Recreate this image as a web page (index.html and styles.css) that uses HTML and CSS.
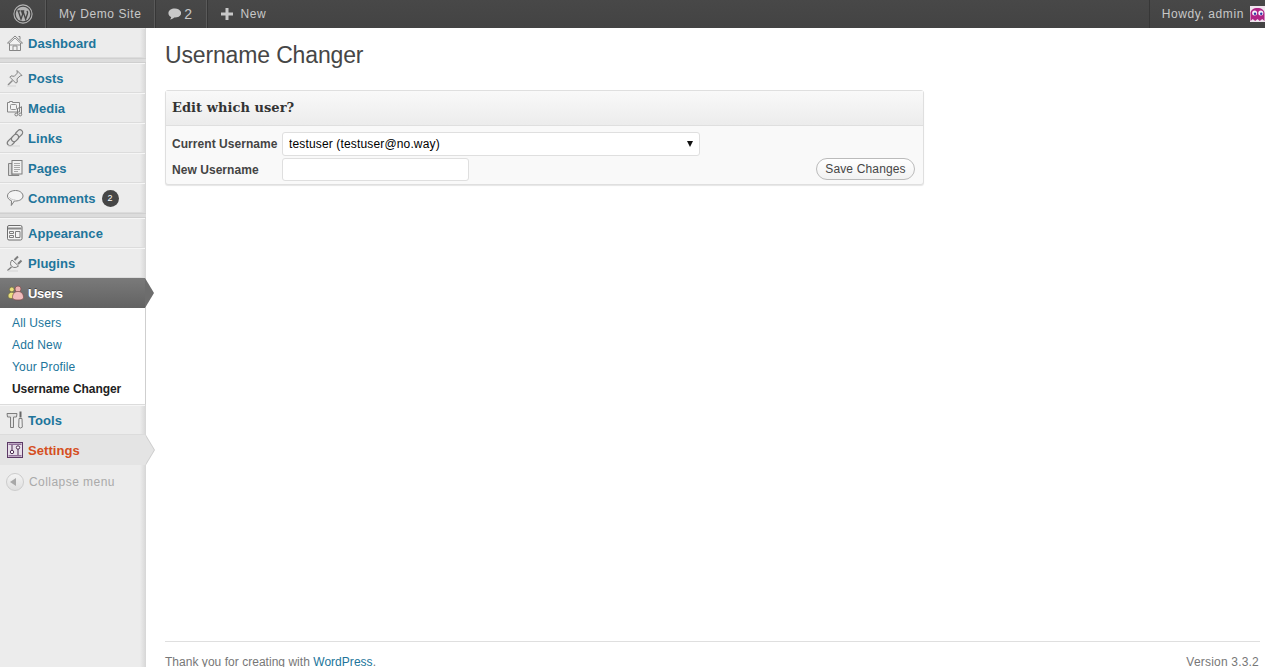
FILE: index.html
```html
<!DOCTYPE html>
<html lang="en">
<head>
<meta charset="utf-8">
<title>Username Changer</title>
<link rel="stylesheet" href="styles.css">
</head>
<body>
<header class="adminbar">
  <a class="bar-item bar-logo" href="#">
    <svg class="wp-logo" viewBox="0 0 22 22"><circle cx="11" cy="11" r="10" fill="none" stroke="#b4b4b4" stroke-width="1.2"/><circle cx="11" cy="11" r="8" fill="#b4b4b4"/><path d="M4.800 7.600h3.400M5.800 7.600l3 9 1.800-5.400-1.200-3.600M8.800 7.600h3.600M10.900 7.600l3 9 1.900-5.600c.7-1.900-.1-2.600-.3-3.400" fill="none" stroke="#464646" stroke-width="1.500"/></svg>
  </a>
  <a class="bar-item bar-site" href="#">My Demo Site</a>
  <a class="bar-item bar-comments" href="#">
    <svg class="bar-bubble" viewBox="0 0 16 14"><path d="M8 .5C3.800.5.500 2.900.500 6c0 2 1.300 3.600 3.300 4.600-.1 1.100-.6 2-1.300 2.900 2-.3 3.600-1.200 4.800-2.300H8c4.200 0 7.500-2.200 7.500-5.200S12.200.5 8 .5z" fill="#c8c8c8"/></svg>
    <span class="bar-count">2</span>
  </a>
  <a class="bar-item bar-new" href="#">
    <svg class="bar-plus" viewBox="0 0 12 12"><path d="M4.500 0h3v4.500H12v3H7.500V12h-3V7.500H0v-3h4.500z" fill="#c8c8c8"/></svg>
    <span>New</span>
  </a>
  <a class="bar-item bar-account" href="#">
    <span>Howdy, admin</span>
    <svg class="avatar" viewBox="0 0 15 16"><rect width="15" height="16" fill="#f0e4ee"/><path d="M.5 15V7.500C.5 4 3.500 2 7.500 2s7 2 7 5.500V15l-2.300-2-2.400 2-2.300-2-2.300 2-2.400-2z" fill="#b02486"/><circle cx="4.600" cy="7" r="2.500" fill="#f4f4fa"/><circle cx="10.800" cy="7" r="2.500" fill="#f4f4fa"/><circle cx="5" cy="7.800" r="1.200" fill="#2f3aa8"/><circle cx="11.200" cy="7.800" r="1.200" fill="#2f3aa8"/></svg>
  </a>
</header>

<div class="layout">
  <nav class="sidemenu">
    <a class="menu-item first" href="#">
      <svg class="ico" viewBox="0 0 18 18"><path d="M1.500 9 9 2l7.500 7h-2v7.500h-11V9z" fill="#f2f2f2" stroke="#858585"/><path d="M3.500 9 9 4l5.500 5M3.500 11h11M7 16.500v-4.500h4v4.500" fill="none" stroke="#8f8f8f"/><path d="M12.500 2.500h1.500v3" fill="none" stroke="#858585"/></svg>
      <span>Dashboard</span>
    </a>
    <div class="menu-sep"></div>
    <a class="menu-item" href="#">
      <svg class="ico" viewBox="0 0 18 18"><path d="M11 1.500l5 5-1.800.4-3.200 2.900.3 3.400-1.500.9-6-6 1.200-1.200 3.300.4 3-3.200z" fill="#e6e6e6" stroke="#858585"/><path d="M6.500 11.500 2 16" stroke="#8c8c8c" stroke-width="1.400"/><path d="M1 17h9" stroke="#d4d4d4"/></svg>
      <span>Posts</span>
    </a>
    <a class="menu-item" href="#">
      <svg class="ico" viewBox="0 0 18 18"><path d="M1.500 3.500h2V2.500h3v1h7v9.500h-12z" fill="#f2f2f2" stroke="#858585"/><rect x="4.500" y="5.500" width="6" height="5" rx="1" fill="none" stroke="#8f8f8f"/><path d="M15.500 7.500v7.500M11.500 9.500v5.500M11.500 9.500l4-1.500" fill="none" stroke="#7d7d7d"/><circle cx="10.300" cy="15.500" r="1.400" fill="#ececec" stroke="#7d7d7d"/><circle cx="14.300" cy="15.500" r="1.400" fill="#ececec" stroke="#7d7d7d"/></svg>
      <span>Media</span>
    </a>
    <a class="menu-item" href="#">
      <svg class="ico" viewBox="0 0 18 18"><g fill="#e6e6e6" stroke="#7d7d7d" stroke-width="1.200"><rect x="9" y="1.800" width="8" height="5.400" rx="2.700" transform="rotate(-45 13 4.500)"/><rect x="1" y="10.300" width="8" height="5.400" rx="2.700" transform="rotate(-45 5 13)"/><rect x="5" y="6.300" width="8" height="5.400" rx="2.700" transform="rotate(-45 9 9)"/></g><path d="M2 17h12" stroke="#d4d4d4"/></svg>
      <span>Links</span>
    </a>
    <a class="menu-item" href="#">
      <svg class="ico" viewBox="0 0 18 18"><path d="M2.500 4.500h3.500v11.500h7v.5h-10.500z" fill="#d8d8d8" stroke="#858585"/><rect x="6" y="1.500" width="10" height="13.500" fill="#f2f2f2" stroke="#7d7d7d"/><path d="M8 4.500h6M8 6.500h6M8 8.500h6M8 10.500h6M8 12.500h4" stroke="#a8a8a8"/></svg>
      <span>Pages</span>
    </a>
    <a class="menu-item" href="#">
      <svg class="ico" viewBox="0 0 18 18"><path d="M9.500 1.500C5 1.500 1.500 3.800 1.500 7c0 2.200 1.600 3.900 4 4.800l-.2 4.700 3-4.500h1.200c4.300 0 7.500-2.100 7.500-5S13.800 1.500 9.500 1.500z" fill="#f4f4f4" stroke="#808080"/><path d="M3 8c1 1.700 3.500 3 6.500 3" fill="none" stroke="#c8c8c8"/></svg>
      <span>Comments</span>
      <span class="count">2</span>
    </a>
    <div class="menu-sep"></div>
    <a class="menu-item" href="#">
      <svg class="ico" viewBox="0 0 18 18"><rect x="1.500" y="1.500" width="14.500" height="14.500" rx="1.500" fill="#f4f4f4" stroke="#6d6d6d"/><path d="M2 4.500h13.500" stroke="#8a8a8a" stroke-width="2"/><path d="M3.500 7.500h4v2h-4zM3.500 11.500h4v2h-4zM9.500 7.500h4.500v6H9.500z" fill="none" stroke="#7d7d7d"/></svg>
      <span>Appearance</span>
    </a>
    <a class="menu-item" href="#">
      <svg class="ico" viewBox="0 0 18 18"><path d="M6 6l6.500 6c-2 1.800-5 2-6.800.4S4.200 8 6 6z" fill="#f0f0f0" stroke="#7d7d7d"/><path d="M8.500 6 12 2.500M12 10l3.500-3.500" fill="none" stroke="#7d7d7d" stroke-width="2"/><path d="M5.500 13 1.500 16.500" fill="none" stroke="#7d7d7d" stroke-width="1.400"/><path d="M2 17h10" stroke="#d4d4d4"/></svg>
      <span>Plugins</span>
    </a>
    <a class="menu-item active" href="#">
      <svg class="ico" viewBox="0 0 18 18"><circle cx="5.800" cy="5.500" r="2.400" fill="#e8df7e" stroke="#6b6740" stroke-width=".7"/><path d="M2 12c0-2 1.600-3.800 3.800-3.800S9.500 10 9.500 12 7.800 14.500 5.800 14.500 2 14 2 12z" fill="#e8df7e" stroke="#6b6740" stroke-width=".7"/><circle cx="12" cy="5" r="3" fill="#eab0b0" stroke="#7d4a4a" stroke-width=".7"/><path d="M6.500 13.500c0-3.600 2-6 5.500-6s5.500 2.400 5.500 6c0 2-2.500 2.500-5.500 2.500s-5.500-.5-5.500-2.500z" fill="#f0bcbc" stroke="#7d4a4a" stroke-width=".7"/></svg>
      <span>Users</span>
    </a>
    <ul class="submenu">
      <li><a href="#">All Users</a></li>
      <li><a href="#">Add New</a></li>
      <li><a href="#">Your Profile</a></li>
      <li><a class="current" href="#">Username Changer</a></li>
    </ul>
    <a class="menu-item" href="#">
      <svg class="ico" viewBox="0 0 18 18"><path d="M1 2.500h10l-.5 3.500H7.500v10.500h-3V6H1.500z" fill="#e2e2e2" stroke="#7d7d7d"/><path d="M14.500 .5v6" stroke="#666" stroke-width="2"/><path d="M13 7.500h3l.3 8.700-1.800.8-1.800-.8z" fill="#f0f0f0" stroke="#7d7d7d"/></svg>
      <span>Tools</span>
    </a>
    <a class="menu-item hover" href="#">
      <svg class="ico" viewBox="0 0 18 18"><rect x="1.500" y="1.500" width="15" height="15" fill="#e8e0ea" stroke="#5c3a66" stroke-width="1"/><rect x="2.500" y="2.500" width="13" height="1.500" fill="#8f6f98"/><rect x="2.500" y="14" width="13" height="1.500" fill="#8f6f98"/><path d="M6 4v5M12 8v6" stroke="#4a2a50"/><circle cx="6" cy="11" r="1.700" fill="#fff" stroke="#4a2a50"/><circle cx="12" cy="6.500" r="1.700" fill="#fff" stroke="#4a2a50"/></svg>
      <span>Settings</span>
    </a>
    <a class="collapse" href="#">
      <span class="collapse-btn"></span>
      <span>Collapse menu</span>
    </a>
  </nav>

  <main class="content">
    <h1 class="page-title">Username Changer</h1>
    <section class="postbox">
      <h2 class="postbox-head">Edit which user?</h2>
      <form class="postbox-body">
        <div class="form-row">
          <label class="form-label" for="cur">Current Username</label>
          <div class="select-wrap">
            <select id="cur" class="select"><option>testuser (testuser@no.way)</option></select>
          </div>
        </div>
        <div class="form-row">
          <label class="form-label" for="new">New Username</label>
          <input id="new" class="text-input" type="text">
          <button class="button" type="button">Save Changes</button>
        </div>
      </form>
    </section>
    <footer class="footer">
      <span>Thank you for creating with <a href="#">WordPress</a>.</span>
      <span class="footer-version">Version 3.3.2</span>
    </footer>
  </main>
</div>
</body>
</html>
```

FILE: styles.css
```css
* { box-sizing: border-box; }
html, body { margin: 0; height: 100%; overflow: hidden; }
body {
  display: flex;
  flex-direction: column;
  font-family: "Liberation Sans", Arial, sans-serif;
  font-size: 12px;
  color: #333;
  background: #fff;
}
a { text-decoration: none; color: #21759b; }

.adminbar {
  flex: none;
  display: flex;
  height: 28px;
  background: linear-gradient(#484848, #434343);
  letter-spacing: .6px;
}
.bar-item {
  display: flex;
  align-items: center;
  height: 28px;
  padding: 0 13px;
  color: #c8c8c8;
  font-size: 12px;
  border-right: 1px solid #5a5a5a;
  box-shadow: 1px 0 0 #373737;
}
.bar-logo { width: 46px; padding: 0 0 0 13px; }
.bar-site { padding-right: 12px; }
.wp-logo { width: 20px; height: 20px; }
.bar-comments { gap: 3px; width: 52px; }
.bar-bubble { width: 16px; height: 14px; }
.bar-count { font-size: 14px; }
.bar-new { gap: 8px; padding-left: 14px; border-right: 0; box-shadow: none; }
.bar-plus { width: 12px; height: 12px; }
.bar-account {
  margin-left: auto;
  padding: 0 0 0 12px;
  gap: 6px;
  border-right: 0;
  border-left: 1px solid #373737;
  box-shadow: none;
}
.avatar { width: 15px; height: 16px; flex: none; }

.layout { flex: 1; display: flex; min-height: 0; }

.sidemenu {
  flex: none;
  width: 146px;
  background: linear-gradient(to right, #ececec 140px, #d6d6d6 146px);
  display: flex;
  flex-direction: column;
  position: relative;
}
.menu-item {
  position: relative;
  display: flex;
  align-items: center;
  gap: 4px;
  width: 145px;
  height: 30px;
  padding-left: 6px;
  font-size: 13px;
  font-weight: bold;
  letter-spacing: .05px;
  color: #21759b;
  border-top: 1px solid #f6f6f6;
  border-bottom: 1px solid #dcdcdc;
}
.menu-item.first { border-top: 1px solid #ececec; }
.ico { width: 18px; height: 18px; flex: none; }
.menu-sep {
  height: 5px;
  background: #dcdcdc;
  border-bottom: 1px solid #cfcfcf;
  border-top: 1px solid #d0d0d0;
}
.count {
  margin-left: 2px;
  width: 17px;
  height: 17px;
  border-radius: 50%;
  background: #464646;
  color: #fff;
  font-size: 9px;
  font-weight: normal;
  letter-spacing: 0;
  display: flex;
  align-items: center;
  justify-content: center;
}
.menu-item.active {
  background: linear-gradient(#7a7a7a, #626262);
  color: #fff;
  border: 0;
  letter-spacing: -.3px;
  text-shadow: 0 -1px 0 rgba(0,0,0,.4);
}
.menu-item.active::after,
.menu-item.hover::after {
  content: "";
  position: absolute;
  left: 145px;
  top: 0;
  border-style: solid;
  border-width: 15px 0 15px 9px;
  border-color: transparent transparent transparent #6d6d6d;
}
.menu-item.hover { background: #e4e4e4; color: #d54e21; border: 0; }
.menu-item.hover::after { border-left-color: #e4e4e4; filter: drop-shadow(1px 0 0 #ccc); }

.submenu {
  list-style: none;
  margin: 0;
  padding: 4px 0 5px;
  height: 97px;
  background: #fff;
  border-bottom: 1px solid #dcdcdc;
  border-right: 1px solid #cfcfcf;
}
.submenu li { height: 22px; display: flex; align-items: center; padding-left: 12px; }
.submenu a { font-size: 12px; letter-spacing: .15px; }
.submenu a.current { color: #222; font-weight: bold; letter-spacing: -.05px; }

.collapse {
  display: flex;
  align-items: center;
  gap: 5px;
  height: 34px;
  padding-left: 6px;
  color: #aaa;
  font-size: 12px;
  letter-spacing: .45px;
}
.collapse-btn {
  position: relative;
  width: 18px;
  height: 18px;
  border-radius: 50%;
  border: 1px solid #ccc;
  background: linear-gradient(#f4f4f4, #dfdfdf);
  flex: none;
}
.collapse-btn::after {
  content: "";
  position: absolute;
  left: 3px;
  top: 4px;
  border-style: solid;
  border-width: 4px 6px 4px 0;
  border-color: transparent #a8a8a8 transparent transparent;
}

.content {
  flex: 1;
  min-width: 0;
  display: flex;
  flex-direction: column;
  padding: 0 5px 0 19px;
}
.page-title {
  margin: 0;
  padding-top: 14px;
  height: 62px;
  font-size: 23px;
  line-height: 27px;
  font-weight: normal;
  letter-spacing: -.15px;
  color: #464646;
}
.postbox {
  width: 759px;
  height: 95px;
  border: 1px solid #dfdfdf;
  border-radius: 3px;
  background: #f9f9f9;
  box-shadow: 0 1px 1px rgba(0,0,0,.1);
}
.postbox-head {
  margin: 0;
  height: 35px;
  padding-left: 6px;
  line-height: 34px;
  font-family: "DejaVu Serif", Georgia, serif;
  font-size: 13px;
  font-weight: bold;
  letter-spacing: .05px;
  color: #333;
  background: linear-gradient(#f9f9f9, #ececec);
  border-bottom: 1px solid #dfdfdf;
}
.postbox-body { padding: 6px 8px 0 6px; display: flex; flex-direction: column; gap: 2px; }
.form-row { display: flex; align-items: center; height: 24px; }
.form-label { width: 110px; font-size: 12px; font-weight: bold; letter-spacing: .05px; color: #444; flex: none; }
.select-wrap { position: relative; width: 418px; height: 24px; }
.select-wrap::after {
  content: "";
  position: absolute;
  right: 7px;
  top: 9px;
  border-style: solid;
  border-width: 6px 3px 0;
  border-color: #111 transparent transparent;
}
.select {
  appearance: none;
  width: 100%;
  height: 24px;
  border: 1px solid #dfdfdf;
  border-radius: 3px;
  background: #fff;
  padding: 0 6px;
  font: 12px "Liberation Sans", Arial, sans-serif;
  letter-spacing: .15px;
  color: #000;
}
.text-input {
  align-self: flex-start;
  width: 187px;
  height: 23px;
  border: 1px solid #dfdfdf;
  border-radius: 3px;
  background: #fff;
}
.button {
  align-self: flex-start;
  margin-left: auto;
  height: 22px;
  width: 99px;
  border: 1px solid #bbb;
  border-radius: 11px;
  background: linear-gradient(#fff, #f2f2f2);
  font: 12px "Liberation Sans", Arial, sans-serif;
  letter-spacing: .15px;
  color: #464646;
  padding: 0;
}
.footer {
  margin-top: auto;
  height: 26px;
  border-top: 1px solid #dfdfdf;
  display: flex;
  justify-content: space-between;
  align-items: flex-start;
  padding-top: 13px;
  color: #777;
  font-size: 12px;
  line-height: 14px;
  letter-spacing: .03px;
}
.footer-version { letter-spacing: .2px; padding-right: 1px; }
```
